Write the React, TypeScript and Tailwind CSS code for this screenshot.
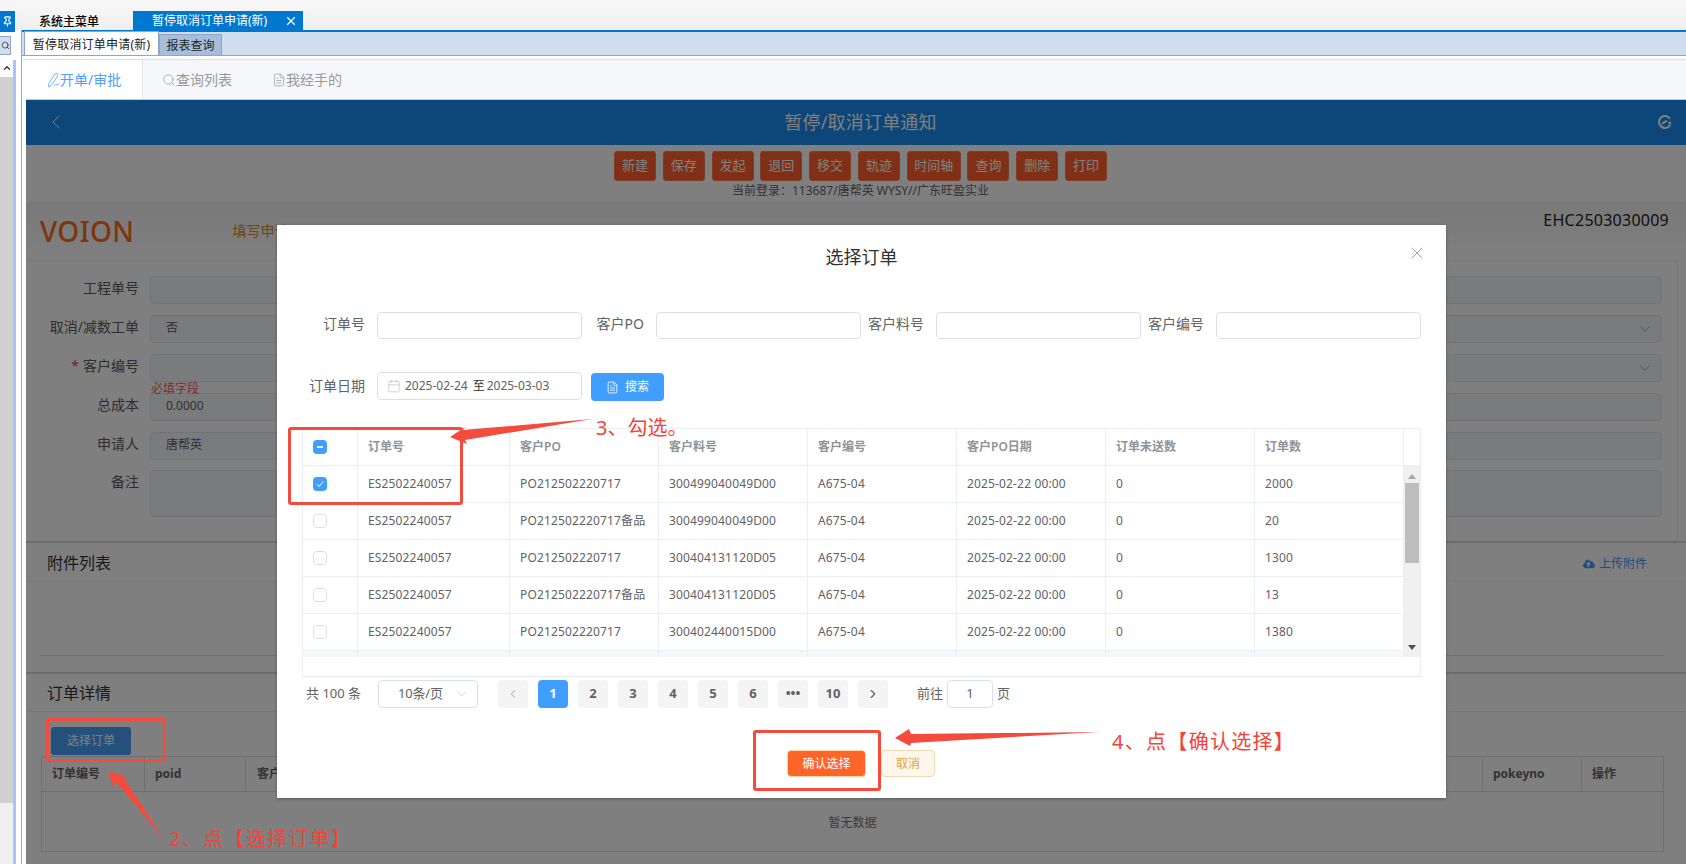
import { Calendar, ChevronDown, ChevronLeft, ChevronRight, ChevronUp, FileText, PenLine, Pin, Search, X } from 'lucide-react'
import { FaCloudUploadAlt } from 'react-icons/fa'

const toolbar = ['新建', '保存', '发起', '退回', '移交', '轨迹', '时间轴', '查询', '删除', '打印']

const orders = [
  { po: 'PO212502220717', part: '300499040049D00', qty: '2000', checked: true },
  { po: 'PO212502220717备品', part: '300499040049D00', qty: '20', checked: false },
  { po: 'PO212502220717', part: '300404131120D05', qty: '1300', checked: false },
  { po: 'PO212502220717备品', part: '300404131120D05', qty: '13', checked: false },
  { po: 'PO212502220717', part: '300402440015D00', qty: '1380', checked: false },
]

const pages = ['1', '2', '3', '4', '5', '6', '•••', '10']

const gridCols = 'grid grid-cols-[55px_152px_149px_149px_149px_149px_149px_149px]'
const cell = 'flex items-center pl-[10px] border-r border-b border-[#ebeef5] whitespace-nowrap'

function FormRow({ label, value, required, chevron }: { label: string; value?: string; required?: boolean; chevron?: boolean }) {
  return (
    <div className="flex items-center h-[28px]">
      <label className="w-[113px] pb-[4px] text-right text-sm text-[#5c5c5c] whitespace-nowrap">
        {required && <span className="text-[#e05050] mr-1">*</span>}
        {label}
      </label>
      <div className="ml-[11px] flex-1 h-full rounded border border-[#e4e7ed] bg-[#f5f7fa] flex items-center justify-between pl-[15px] pr-[7px] text-xs text-[#606266]">
        <span className="pb-[2px]">{value}</span>
        {chevron && <ChevronDown className="w-[18px] h-[18px] text-[#a0a4ac]" strokeWidth={1.25} />}
      </div>
    </div>
  )
}

function FilterInput({ label, width }: { label: string; width: string }) {
  return (
    <div className="flex items-center">
      <span className={`${width} pr-[12px] pb-[3px] text-right text-sm text-[#606266] whitespace-nowrap`}>{label}</span>
      <div className="w-[205px] h-[27px] rounded border border-[#dcdfe6] bg-white" />
    </div>
  )
}

function CheckBox({ state }: { state: 'off' | 'on' | 'some' }) {
  if (state === 'off') return <span className="w-[14px] h-[14px] rounded-sm border border-[#dcdfe6] bg-white" />
  return (
    <span className="w-[14px] h-[14px] rounded-sm bg-[#409eff] flex items-center justify-center">
      {state === 'some' ? (
        <span className="w-[6px] h-[2px] bg-[#d8ebff]" />
      ) : (
        <svg width="10" height="10" viewBox="0 0 10 10" fill="none" stroke="white" strokeWidth="1">
          <path d="M2 5.2 4.2 7.6 8.2 2.4" />
        </svg>
      )}
    </span>
  )
}

function OrderTable() {
  return (
    <div className="h-[249px] border border-[#ebeef5] border-b-[#e4e7ed] text-xs">
      <div className="flex">
        <div className="flex-1">
          <div className={`${gridCols} h-[37px] text-[#909399] font-semibold`}>
            <div className="flex items-center pl-[10px] border-r border-b border-[#ebeef5]">
              <CheckBox state="some" />
            </div>
            {['订单号', '客户PO', '客户料号', '客户编号', '客户PO日期', '订单未送数', '订单数'].map((h) => (
              <div key={h} className={cell}>
                {h}
              </div>
            ))}
          </div>
          {orders.map((o, i) => (
            <div key={i} className={`${gridCols} h-[37px] text-[#606266] tracking-[0.15px]`}>
              <div className="flex items-center pl-[10px] border-r border-b border-[#ebeef5]">
                <CheckBox state={o.checked ? 'on' : 'off'} />
              </div>
              <div className={cell}>ES2502240057</div>
              <div className={cell}>{o.po}</div>
              <div className={cell}>{o.part}</div>
              <div className={cell}>A675-04</div>
              <div className={cell}>2025-02-22 00:00</div>
              <div className={cell}>0</div>
              <div className={cell}>{o.qty}</div>
            </div>
          ))}
          <div className={`${gridCols} h-[6px] bg-[#f5f7fa]`}>
            {Array.from({ length: 8 }).map((_, i) => (
              <div key={i} className="border-r border-[#ebeef5]" />
            ))}
          </div>
        </div>
        {/* scroll gutter */}
        <div className="w-[16px] flex flex-col">
          <div className="h-[37px] border-b border-[#ebeef5]" />
          <div className="flex-1 bg-[#f0f0f0] flex flex-col items-center">
            <svg className="mt-[8px]" width="8" height="5" viewBox="0 0 8 5" fill="#a8a8a8">
              <path d="M4 0 8 5H0z" />
            </svg>
            <div className="mt-[4px] w-[14px] h-[80px] bg-[#bdbdbd]" />
            <svg className="mt-auto mb-[7px]" width="8" height="5" viewBox="0 0 8 5" fill="#505050">
              <path d="M0 0h8L4 5z" />
            </svg>
          </div>
        </div>
      </div>
    </div>
  )
}

function Pager() {
  const btn = 'w-[30px] h-[28px] rounded-sm flex items-center justify-center font-bold text-[13px]'
  return (
    <div className="mt-[3px] h-[28px] flex items-center text-[13px] text-[#606266] pl-[4px]">
      <span className="w-[72px] whitespace-nowrap">共 100 条</span>
      <div className="w-[100px] h-[28px] rounded border border-[#dcdfe6] flex items-center justify-between pl-[19px] pr-[8px]">
        <span className="tracking-[-0.2px]">10条/页</span>
        <ChevronDown className="w-[14px] h-[14px] text-[#c0c4cc]" strokeWidth={1.25} />
      </div>
      <div className="ml-[20px] flex gap-[10px]">
        <div className={`${btn} bg-[#f4f4f5] text-[#c0c4cc]`}>
          <ChevronLeft className="w-[14px] h-[14px]" strokeWidth={2} />
        </div>
        {pages.map((p) => (
          <div key={p} className={`${btn} ${p === '1' ? 'bg-[#409eff] text-white' : 'bg-[#f4f4f5] text-[#606266]'}`}>
            {p}
          </div>
        ))}
        <div className={`${btn} bg-[#f4f4f5] text-[#606266]`}>
          <ChevronRight className="w-[14px] h-[14px]" strokeWidth={2} />
        </div>
      </div>
      <span className="ml-[29px] whitespace-nowrap">前往</span>
      <div className="ml-[4px] w-[46px] h-[28px] rounded border border-[#dcdfe6] flex items-center justify-center">1</div>
      <span className="ml-[4px]">页</span>
    </div>
  )
}

function OrderDialog() {
  return (
    <div className="absolute left-[277px] top-[225px] w-[1169px] h-[573px] bg-white pl-[25px] pr-[25px] shadow-[0_1px_3px_rgba(0,0,0,0.3)]">
      <div className="relative h-[87px]">
        <h2 className="absolute left-0 right-0 top-[19px] text-center text-lg text-[#303133] leading-[26px]">选择订单</h2>
        <X className="absolute right-[-6px] top-[18px] w-[20px] h-[20px] text-[#909399]" strokeWidth={1} />
      </div>
      <div className="flex">
        <FilterInput label="订单号" width="w-[75px]" />
        <FilterInput label="客户PO" width="w-[74px]" />
        <FilterInput label="客户料号" width="w-[75px]" />
        <FilterInput label="客户编号" width="w-[75px]" />
      </div>
      <div className="mt-[33px] flex items-center">
        <span className="w-[75px] pr-[12px] pb-[1px] text-right text-sm text-[#606266] whitespace-nowrap">订单日期</span>
        <div className="w-[205px] h-[28px] rounded border border-[#dcdfe6] flex items-center pl-[9px] text-xs text-[#606266] whitespace-nowrap">
          <Calendar className="w-[14px] h-[14px] text-[#c0c4cc]" strokeWidth={1.25} />
          <span className="ml-[4px]">2025-02-24</span>
          <span className="ml-[5px] text-[#303133]">至</span>
          <span className="ml-[2px]">2025-03-03</span>
        </div>
        <button className="ml-[9px] translate-y-px w-[73px] h-[28px] rounded-sm bg-[#409eff] text-white text-xs flex items-center justify-center gap-[6px]">
          <FileText className="w-[13px] h-[13px]" strokeWidth={1.5} />
          搜索
        </button>
      </div>
      <div className="mt-[28px]">
        <OrderTable />
      </div>
      <Pager />
      <div className="mt-[42px] pl-[485px] flex text-xs">
        <button className="w-[79px] h-[27px] rounded-sm bg-[#ff6528] border border-[#fbd3a8] text-white">确认选择</button>
        <button className="ml-[15px] w-[54px] h-[27px] rounded-sm bg-[#fdf6ec] border border-[#f5dab1] text-[#e6a23c]">取消</button>
      </div>
    </div>
  )
}

function Annotations() {
  const box = 'absolute border-[3px] border-[#f44b3f] rounded-[3px] pointer-events-none'
  const note = 'absolute text-xl leading-[26px] text-[#f44336] whitespace-nowrap'
  return (
    <>
      <svg className="absolute left-0 top-0 pointer-events-none" width="1686" height="864" fill="#f44b3f">
        <polygon points="592,419 463,430 465,427 450,437 467,444 465,440" />
        <polygon points="1099,732 911,734 909,729 895,738 910,746 911,743" />
        <polygon points="164,839 124,778 127,777 109,771 112,787 116,782" />
      </svg>
      <div className={`${box} left-[288px] top-[427px] w-[175px] h-[78px]`} />
      <div className={`${box} left-[753px] top-[730px] w-[128px] h-[61px]`} />
      <div className={`${box} left-[46px] top-[718px] w-[120px] h-[44px]`} />
      <span className={`${note} left-[596px] top-[415px]`}>3、勾选。</span>
      <span className={`${note} left-[1112px] top-[729px] tracking-[1.3px]`}>4、点【确认选择】</span>
      <span className={`${note} left-[169px] top-[826px] tracking-[1.3px]`}>2、点【选择订单】</span>
    </>
  )
}

function Page() {
  return (
    <div className="relative flex-1 bg-white flex flex-col overflow-hidden border-t border-[#c8c8c8]">
      {/* title bar */}
      <div className="h-[45px] shrink-0 bg-[#1a8cf2] relative flex items-center justify-center pl-[9px] pb-[2px] text-lg tracking-[0.2px] text-white">
        <ChevronLeft className="absolute left-[18px] top-[10px] w-[24px] h-[24px]" strokeWidth={1} />
        暂停/取消订单通知
        <svg className="absolute right-[14px] top-[15px]" width="15" height="15" viewBox="0 0 15 15" fill="none" stroke="white" strokeWidth="2">
          <path d="M13 3.6A6 6 0 1 0 13.2 10" />
          <path d="M5 8.6 10 5.6" />
          <circle cx="12.8" cy="8" r="0.6" />
        </svg>
      </div>
      {/* toolbar */}
      <div className="h-[57px] shrink-0 pl-[9px] pt-[6px] flex flex-col items-center">
        <div className="flex gap-[6.8px]">
          {toolbar.map((t) => (
            <button
              key={t}
              className={`${t === '时间轴' ? 'w-[54px]' : 'w-[42px]'} h-[30px] rounded-[3px] bg-[#ff602d] border border-[#ff7a4d] text-[13px] text-white`}
            >
              {t}
            </button>
          ))}
        </div>
        <p className="text-xs leading-[20px] text-[#666]">当前登录：113687/唐帮英 WYSY//广东旺盈实业</p>
      </div>
      {/* logo row */}
      <div className="h-[58px] shrink-0 flex items-start bg-gradient-to-b from-[#f2f2f2] to-white">
        <span className="ml-[14px] mt-[12px] text-[28px] leading-[34px] font-medium tracking-[0.4px] text-[#ff6a1a]">VOION</span>
        <span className="ml-[98px] mt-[19px] text-sm text-[#e08a20]">填写申请</span>
        <span className="ml-auto mr-[17px] mt-[6px] text-base tracking-[0.25px] text-[#222]">EHC2503030009</span>
      </div>
      {/* form */}
      <div className="h-[281px] shrink-0 mr-[8px] rounded-t border-t border-r border-[#eeeeee] pt-[15px] pr-[15px] flex flex-col gap-[11px]">
        <FormRow label="工程单号" />
        <FormRow label="取消/减数工单" value="否" chevron />
        <div className="relative">
          <FormRow label="客户编号" required chevron />
          <span className="absolute left-[125px] top-[28px] text-xs leading-[13px] text-[#ff5a5a]">必填字段</span>
        </div>
        <FormRow label="总成本" value="0.0000" />
        <FormRow label="申请人" value="唐帮英" />
        <div className="flex h-[47px] -mt-px">
          <label className="w-[113px] text-right text-sm text-[#5c5c5c] pt-[2px]">备注</label>
          <div className="ml-[11px] flex-1 rounded border border-[#e4e7ed] bg-[#f5f7fa]" />
        </div>
      </div>
      {/* attachments */}
      <div className="h-[131px] shrink-0 border-t-2 border-[#d8d8d8] flex flex-col">
        <div className="h-[39px] shrink-0 border-b border-[#ebeef5] flex items-center justify-between pl-[21px] pr-[39px]">
          <span className="pt-[2px] text-base text-[#333]">附件列表</span>
          <span className="pt-[4px] flex items-center gap-[4px] text-xs text-[#409eff]">
            <FaCloudUploadAlt className="w-[12px] h-[12px]" />
            上传附件
          </span>
        </div>
        <div className="h-[74px] shrink-0 mx-[14px] mr-[22px] border-b border-[#dedede]" />
      </div>
      {/* order detail */}
      <div className="flex-1 border-t-2 border-[#d8d8d8] flex flex-col">
        <div className="h-[38px] shrink-0 border-b border-[#ebeef5] flex items-center pl-[21px] text-base text-[#333]">订单详情</div>
        <div className="mt-[15px] pl-[25px]">
          <button className="w-[80px] h-[28px] rounded-[3px] bg-[#4aa0f8] text-xs text-white">选择订单</button>
        </div>
        <div className="mt-px ml-[15px] mr-[22px] border border-[#dcdfe6] text-xs">
          <div className="h-[35px] flex items-center font-bold text-[#666] border-b border-[#dcdfe6]">
            <div className="w-[103px] h-full flex items-center pl-[10px] border-r border-[#dcdfe6]">订单编号</div>
            <div className="w-[101px] h-full flex items-center pl-[10px] border-r border-[#dcdfe6]">poid</div>
            <div className="flex-1 h-full flex items-center pl-[11px]">客户</div>
            <div className="w-[100px] h-full flex items-center pl-[10px] border-x border-[#dcdfe6]">pokeyno</div>
            <div className="w-[81px] h-full flex items-center pl-[10px]">操作</div>
          </div>
          <div className="h-[59px] pt-[2px] flex items-center justify-center text-[#777]">暂无数据</div>
        </div>
      </div>
      {/* mask */}
      <div className="absolute inset-0 bg-black/50" />
    </div>
  )
}

export default function App() {
  return (
    <div className="relative w-[1686px] h-[864px] overflow-hidden flex bg-white font-['Noto_Sans','Noto_Sans_CJK_SC',sans-serif]">
      {/* left rail */}
      <aside className="w-[16px] shrink-0 flex flex-col">
        <div className="h-[11px] shrink-0 bg-[#f5f5f5]" />
        <div className="h-[21px] w-[15px] shrink-0 bg-[#0078d0] flex items-center justify-center">
          <Pin className="w-[11px] h-[11px] text-white" strokeWidth={2.5} />
        </div>
        <div className="mt-[4px] h-[19px] w-[11px] shrink-0 bg-[#d0ddee] border-y border-r border-[#8ea6c6] flex items-center justify-end">
          <Search className="w-[9px] h-[9px] text-[#333]" strokeWidth={2} />
        </div>
        <div className="mt-[5px] flex-1 flex">
          <div className="w-[13px] flex flex-col">
            <div className="h-[17px] flex justify-center">
              <ChevronUp className="w-[10px] h-[10px] mt-[3px] text-[#333]" strokeWidth={3} />
            </div>
            <div className="flex-1 bg-[#d0d0d0]" />
            <div className="h-[61px] bg-[#f0f0f0]" />
          </div>
          <div className="w-[3px] bg-[#a6c4f5]" />
        </div>
      </aside>

      <main className="flex-1 min-w-0 flex flex-col">
        {/* window tabs */}
        <div className="h-[30px] shrink-0 flex items-end bg-gradient-to-b from-[#f8f8f8] to-[#eeeeee] text-xs">
          <div className="w-[117px] h-[19px] pl-[23px] pt-[2px] font-medium text-black flex items-center">系统主菜单</div>
          <div className="w-[170px] h-[19px] bg-[#0078d0] text-white flex items-center pl-[19px] pr-[5px] pt-[1px] justify-between whitespace-nowrap">
            暂停取消订单申请(新)
            <X className="w-[14px] h-[14px]" strokeWidth={2} />
          </div>
        </div>
        <div className="flex-1 min-h-0 flex">
          <div className="w-[5px] shrink-0" />
          <div className="flex-1 min-w-0 flex flex-col border-l border-[#8aaae0]">
            <div className="h-[2px] shrink-0 bg-[#0078d0]" />
            {/* page tabs */}
            <div className="h-[24px] shrink-0 bg-[#d0ddee] border-b border-[#8ea6c6] flex items-end pl-[2px] text-xs whitespace-nowrap">
              <div className="w-[135px] h-[24px] pt-[2px] bg-white border border-b-0 border-[#8ea6c6] flex items-center justify-center tracking-[0.2px] text-[#222]">
                暂停取消订单申请(新)
              </div>
              <div className="w-[63px] h-[21px] pt-[1px] bg-[#a6bedb] border border-b-0 border-[#8ea6c6] flex items-center justify-center text-[#222]">
                报表查询
              </div>
            </div>
            <div className="h-[4px] shrink-0 border-b border-[#dddddd]" />
            <div className="flex-1 min-h-0 flex">
              <div className="w-[4px] shrink-0" />
              <div className="flex-1 min-w-0 flex flex-col">
                {/* sub tabs */}
                <div className="h-[39px] shrink-0 bg-[#f5f7fb] flex text-sm text-[#999] whitespace-nowrap">
                  <div className="w-[117px] bg-white border-r border-[#e4e7ed] flex items-center pl-[20px] text-[#4f9fff]">
                    <PenLine className="w-[14px] h-[14px] -rotate-12" strokeWidth={1.25} />
                    开单/审批
                  </div>
                  <div className="ml-[19px] flex items-center">
                    <Search className="w-[14px] h-[14px]" strokeWidth={1.25} />
                    查询列表
                  </div>
                  <div className="ml-[40px] flex items-center">
                    <FileText className="w-[14px] h-[14px]" strokeWidth={1.25} />
                    我经手的
                  </div>
                </div>
                <Page />
              </div>
            </div>
          </div>
        </div>
      </main>

      <OrderDialog />
      <Annotations />
    </div>
  )
}
